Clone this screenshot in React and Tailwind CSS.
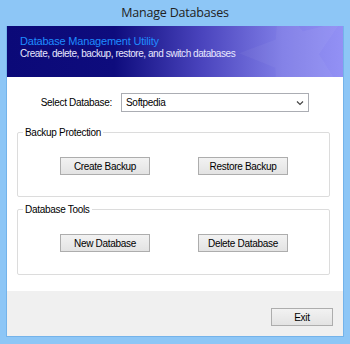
import React from "react";

const ui = { fontFamily: '"Liberation Sans", Arial, sans-serif' };

function WinButton({ children, className = "" }) {
  return (
    <button
      style={ui}
      className={`h-[18px] border border-[#adadad] bg-gradient-to-b from-[#f2f2f2] to-[#e3e3e3] text-[10px] tracking-[-0.3px] text-black flex items-center justify-center ${className}`}
    >
      {children}
    </button>
  );
}

function GroupBox({ title, children, className = "" }) {
  return (
    <div className={`relative border border-[#dcdcdc] rounded-[2px] ${className}`}>
      <span
        style={ui}
        className="absolute -top-[6px] left-[5px] bg-white px-[2px] text-[10px] leading-[11px] tracking-[-0.3px] text-black"
      >
        {title}
      </span>
      {children}
    </div>
  );
}

function Star() {
  // faint star in the banner corner
  const pts = [];
  for (let i = 0; i < 10; i++) {
    const r = i % 2 === 0 ? 56 : 24;
    const a = (Math.PI / 5) * i - Math.PI / 2 - 0.3;
    pts.push(`${62 + r * Math.cos(a)},${28 + r * Math.sin(a)}`);
  }
  return (
    <svg
      className="absolute right-0 top-0 pointer-events-none"
      width="110"
      height="51"
      viewBox="0 0 110 51"
    >
      <polygon points={pts.join(" ")} fill="#ffffff" fillOpacity="0.045" />
    </svg>
  );
}

export default function App() {
  return (
    <div className="w-[350px] h-[344px] bg-[#8dc6f6] flex flex-col">
      <div
        className="h-[26px] flex items-center justify-center text-[12.5px] text-[#222] tracking-[-0.2px]"
        style={{ fontFamily: '"Open Sans", "Noto Sans", sans-serif' }}
      >
        Manage Databases
      </div>
      <div className="mx-[6px] border border-[#74b3ea] border-t-0 flex flex-col h-[311px]">
        <div className="relative h-[51px] bg-[linear-gradient(90deg,#0b0978_0%,#0e0c7d_32%,#4a44bd_58%,#7f7de6_82%,#9391f5_100%)] pl-[13px] pt-[9px] overflow-hidden">
          <div style={ui} className="text-[11px] leading-[13px] text-[#1e8cff] tracking-[-0.2px]">
            Database Management Utility
          </div>
          <div style={ui} className="text-[10px] leading-[12px] text-[#e8e8ff] tracking-[-0.45px]">
            Create, delete, backup, restore, and switch databases
          </div>
          <Star />
        </div>
        <div className="relative h-[214px] bg-white pt-[16px] px-[10px]">
          <div className="flex items-center h-[19px]">
            <div style={ui} className="w-[95px] text-right text-[10px] tracking-[-0.3px] text-black">
              Select Database:
            </div>
            <div className="ml-[9px] w-[188px] h-[19px] border border-[#abadb3] bg-white flex items-center pl-[4px] pr-[4px]">
              <span style={ui} className="text-[10px] tracking-[-0.3px] text-black flex-1">
                Softpedia
              </span>
              <svg width="8" height="6" viewBox="0 0 8 6">
                <path d="M1 1.5 L4 4.5 L7 1.5" stroke="#444" strokeWidth="1.2" fill="none" />
              </svg>
            </div>
          </div>
          <GroupBox title="Backup Protection" className="mt-[20px] h-[65px] w-[313px]">
            <div className="flex pt-[24px] pl-[42px] gap-[48px]">
              <WinButton className="w-[90px]">Create Backup</WinButton>
              <WinButton className="w-[90px]">Restore Backup</WinButton>
            </div>
          </GroupBox>
          <GroupBox title="Database Tools" className="mt-[12px] h-[66px] w-[313px]">
            <div className="flex pt-[24px] pl-[42px] gap-[48px]">
              <WinButton className="w-[90px]">New Database</WinButton>
              <WinButton className="w-[90px]">Delete Database</WinButton>
            </div>
          </GroupBox>
        </div>
        <div className="h-[45px] bg-[#f0f0f0] flex justify-end items-start pt-[17px] pr-[10px]">
          <WinButton className="w-[62px]">Exit</WinButton>
        </div>
      </div>
    </div>
  );
}
